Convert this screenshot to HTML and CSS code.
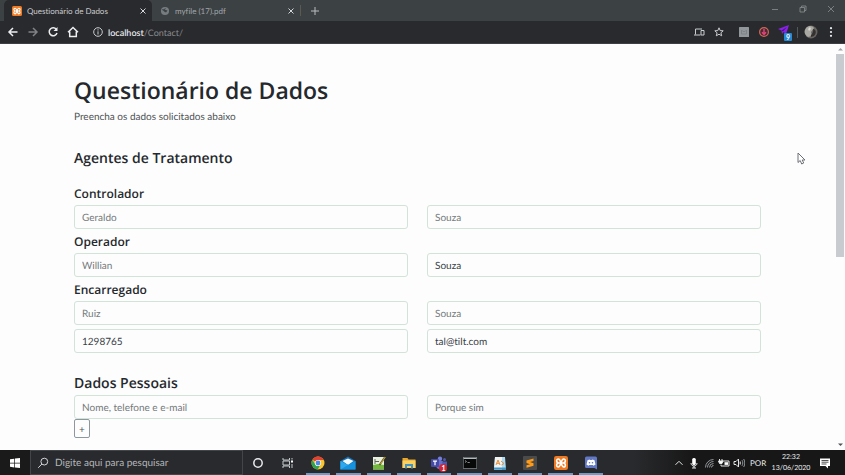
FILE: index.html
```html
<!DOCTYPE html>
<html lang="pt-BR">
<head>
<meta charset="utf-8">
<meta name="viewport" content="width=device-width, initial-scale=1">
<title>Questionário de Dados</title>
<link rel="stylesheet" href="styles.css">
</head>
<body>
<header class="browser">
  <div class="tabs">
    <div class="tab tab-active">
      <svg class="favicon" viewBox="0 0 16 16"><rect width="16" height="16" rx="2.500" fill="#ef7a24"/><path d="M5 3.500a2 2 0 0 0-2 2c0 1.500 1 2.500 2.500 2.500h5c1.500 0 2.500-1 2.500-2.500a2 2 0 0 0-2-2c-3 0-3 9-6 9a2 2 0 0 1-2-2C3 9 4 8 5.500 8M5 3.500c3 0 3 9 6 9a2 2 0 0 0 2-2C13 9 12 8 10.500 8" fill="none" stroke="#fff" stroke-width="1.800"/></svg>
      <span class="tab-title">Questionário de Dados</span>
      <button class="tab-close" aria-label="Fechar guia"><svg viewBox="0 0 8 8"><path d="M1.500 1.500l5 5M6.500 1.500l-5 5"/></svg></button>
    </div>
    <div class="tab">
      <svg class="favicon" viewBox="0 0 16 16"><circle cx="8" cy="8" r="6.500" fill="#777c80"/><path d="M3 6c2-2 3 0 4-1s0-2 2-2l-1 3 4 1-2 3H8L6 8z" fill="#3c4144"/></svg>
      <span class="tab-title">myfile (17).pdf</span>
      <button class="tab-close" aria-label="Fechar guia"><svg viewBox="0 0 8 8"><path d="M1.500 1.500l5 5M6.500 1.500l-5 5"/></svg></button>
    </div>
    <button class="new-tab" aria-label="Nova guia"><svg viewBox="0 0 10 10"><path d="M5 1v8M1 5h8"/></svg></button>
    <div class="window-controls">
      <button aria-label="Minimizar"><svg viewBox="0 0 8 8"><path d="M1 4.500h6"/></svg></button>
      <button aria-label="Restaurar"><svg viewBox="0 0 8 8"><path d="M1 2.500h4.500V7H1zM2.500 2.500V1H7v4.500H5.500"/></svg></button>
      <button aria-label="Fechar"><svg viewBox="0 0 8 8"><path d="M1 1l6 6M7 1L1 7"/></svg></button>
    </div>
  </div>
  <nav class="toolbar">
    <button class="tool" aria-label="Voltar"><svg viewBox="0 0 12 12"><path d="M10.500 6H2M6 2L2 6l4 4"/></svg></button>
    <button class="tool tool-off" aria-label="Avançar"><svg viewBox="0 0 12 12"><path d="M1.500 6H10M6 2l4 4-4 4"/></svg></button>
    <button class="tool" aria-label="Recarregar"><svg viewBox="0 0 12 12"><path d="M9.300 3.200A4 4 0 1 0 10 7"/><path d="M10.500 1v4h-4z" fill="#eceef0" stroke="none"/></svg></button>
    <button class="tool" aria-label="Início"><svg viewBox="0 0 12 12"><path d="M1 6.300L6 1.500l5 4.800M2.700 5.500v5h6.600v-5"/></svg></button>
    <button class="tool tool-thin site-info" aria-label="Informações do site"><svg viewBox="0 0 12 12"><circle cx="6" cy="6" r="4.300"/><path d="M6 5.300v3.200M6 3.300v1.200"/></svg></button>
    <span class="url"><b>localhost</b>/Contact/</span>
    <button class="tool tool-thin" aria-label="Enviar para dispositivos"><svg viewBox="0 0 12 12"><path d="M9 3H2.500v5.500M1 9h6.500M8 4.500h3V9H8z"/></svg></button>
    <button class="tool tool-thin" aria-label="Favoritar"><svg viewBox="0 0 12 12"><path d="M6 1.800l1.200 2.800 3 .2-2.300 2 .8 3L6 8.200 3.300 9.800l.8-3-2.300-2 3-.2z"/></svg></button>
    <button class="tool extensions" aria-label="Extensão"><svg viewBox="0 0 12 12"><rect x="1" y="1" width="10" height="10" rx=".5" fill="#92979c" stroke="none"/><path d="M3.500 4l1.500 1.500h2L8.500 4v4h-5z" fill="none" stroke="#7d8287" stroke-width="1"/></svg></button>
    <button class="tool" aria-label="Downloads"><svg viewBox="0 0 12 12"><circle cx="6" cy="6" r="4.400" fill="#4a2836" stroke="#d06a55" stroke-width="1.200"/><path d="M6 3v5M4 6.300L6 8.500l2-2.200" stroke="#e0447a" stroke-width="1.400"/></svg></button>
    <button class="tool" aria-label="Mensagens, 9"><svg class="icon-badged" viewBox="0 0 14 14"><path d="M1 4L12 0 9 9 6.500 7 5 9 4.500 5.500z" fill="#8a22e6"/><path d="M4.500 5.500L10 2 6 6.500z" fill="#44107e"/></svg><span class="badge">9</span></button>
    <span class="divider"></span>
    <button class="tool" aria-label="Perfil"><svg class="avatar" viewBox="0 0 14 14"><circle cx="7" cy="7" r="6.500" fill="#67635f"/><path d="M2 3c3-3 7-2 8 0L7 7l1 4-4 1C0 9 0 6 2 3z" fill="#aaa8a2"/><path d="M9 4c3 0 4 4 1 7l-3 1c-1-3 3-3 2-8z" fill="#33302f"/><path d="M4 4l2-2 1 2-2 2z" fill="#d8d8d2"/></svg></button>
    <button class="tool" aria-label="Menu"><svg viewBox="0 0 12 12"><g fill="#eceef0" stroke="none"><circle cx="6" cy="2.200" r="1.100"/><circle cx="6" cy="6" r="1.100"/><circle cx="6" cy="9.800" r="1.100"/></g></svg></button>
  </nav>
</header>

<div class="viewport">
  <main class="page">
    <h1>Questionário de Dados</h1>
    <p>Preencha os dados solicitados abaixo</p>
    <form>
      <h2>Agentes de Tratamento</h2>
      <div class="group">
        <h3><label for="controlador">Controlador</label></h3>
        <div class="fields">
          <input id="controlador" type="text" placeholder="Geraldo">
          <input type="text" placeholder="Souza" aria-label="Sobrenome do controlador">
        </div>
      </div>
      <div class="group">
        <h3><label for="operador">Operador</label></h3>
        <div class="fields">
          <input id="operador" type="text" placeholder="Willian">
          <input type="text" value="Souza" aria-label="Sobrenome do operador">
        </div>
      </div>
      <div class="group">
        <h3><label for="encarregado">Encarregado</label></h3>
        <div class="fields">
          <input id="encarregado" type="text" placeholder="Ruiz">
          <input type="text" placeholder="Souza" aria-label="Sobrenome do encarregado">
          <input type="text" value="1298765" aria-label="Telefone do encarregado">
          <input type="text" value="tal@tilt.com" aria-label="E-mail do encarregado">
        </div>
      </div>
      <h2 class="personal"><label for="dados">Dados Pessoais</label></h2>
      <div class="fields">
        <input id="dados" type="text" placeholder="Nome, telefone e e-mail">
        <input type="text" placeholder="Porque sim" aria-label="Motivo">
      </div>
      <button class="add" type="button" aria-label="Adicionar">+</button>
    </form>
  </main>
  <div class="scrollbar" aria-hidden="true">
    <svg viewBox="0 0 9 10"><path d="M2 6.500L4.500 4 7 6.500z" fill="#a0a3a7"/></svg>
    <div class="thumb"></div>
    <svg class="scroll-down" viewBox="0 0 9 10"><path d="M2 3.500L4.500 6 7 3.500z" fill="#505357"/></svg>
  </div>
  <svg class="pointer" viewBox="0 0 9 13"><path d="M1 1v9.500l2.200-2 1.500 3.500 2-1-1.500-3H8z" fill="#fff" stroke="#6c7075"/></svg>
</div>

<footer class="taskbar">
  <button class="start" aria-label="Iniciar"><svg viewBox="0 0 12 12"><path d="M1 2.300l4.300-.6v4H1zM6 1.600L11 1v4.700H6zM1 6.400h4.300v4L1 9.800zM6 6.400h5V11l-5-.6z" fill="#fff"/></svg></button>
  <label class="search">
    <svg viewBox="0 0 12 12"><circle cx="7.300" cy="4.600" r="3.400"/><path d="M4.900 7L1.200 10.800"/></svg>
    <input type="text" placeholder="Digite aqui para pesquisar">
  </label>
  <button class="shell" aria-label="Cortana"><svg viewBox="0 0 14 14"><circle cx="7" cy="7" r="4.200" fill="none" stroke="#e8eaec" stroke-width="1.500"/></svg></button>
  <button class="shell" aria-label="Visão de tarefas"><svg viewBox="0 0 14 14"><path d="M2 2v2h6.500V2M2 12v-2h6.500v2M2 5v4h6.500V5zM11 2v1.500M11 8v4" fill="none" stroke="#c5c9cc"/><path d="M10 4.500h2v2h-2z" fill="#fff"/></svg></button>
  <div class="apps">
    <button aria-label="Chrome"><svg viewBox="0 0 14 14"><circle cx="7" cy="7" r="6.500" fill="#fbc52d"/><path d="M7 7L1.400 3.700A6.500 6.500 0 0 1 12.700 4H7z" fill="#e34133"/><path d="M1.400 3.700A6.500 6.500 0 0 0 6.700 13.500L9.600 8.500 7 7 4.200 8.500z" fill="#30a251"/><circle cx="7" cy="7" r="3.100" fill="#fff"/><circle cx="7" cy="7" r="2.400" fill="#4a88ea"/></svg></button>
    <button aria-label="Email"><svg class="wide" viewBox="0 0 16 14"><path d="M.5 5L8 .5 15.500 5v8.500H.5z" fill="#1572b8"/><path d="M2.500 5L8 2.500 13.500 5 8 9z" fill="#f3f8fb"/><path d="M.5 5L8 9l7.500-4v8.500H.5z" fill="#1693df"/><path d="M.5 5L8 9 .5 13.500z" fill="#2fa8ee"/></svg></button>
    <button aria-label="Notepad++"><svg viewBox="0 0 14 14"><path d="M1 1h11v12.500H1z" fill="#e9f0de"/><path d="M1 9l5-1 6 1v4.500H1z" fill="#72b83c"/><path d="M3 3v5M3 5.500h4" stroke="#5b6659"/><path d="M13 1L7.500 9" stroke="#655d29" stroke-width="1.800"/><path d="M13.300 1L8.500 8" stroke="#dcb836" stroke-width=".8"/></svg></button>
    <button aria-label="Explorador de Arquivos"><svg viewBox="0 0 14 14"><path d="M.5 2h5l1 1.500h7V12H.5z" fill="#e9a72d"/><path d="M.5 4.500h13V12H.5z" fill="#fad160"/><path d="M3 12.500V8h8v4.500H9V10H5v2.500z" fill="#3d94cb"/></svg></button>
    <button aria-label="Teams, 1"><svg class="wide" viewBox="0 0 16 14"><circle cx="9" cy="2.700" r="2.200" fill="#777edb"/><circle cx="13.500" cy="3.500" r="1.500" fill="#5158ae"/><path d="M5 5h7v7c-2 2-6 2-7-2z" fill="#6870ce"/><path d="M11 5.500h5v4c-1 3-4 2-4 1z" fill="#5057ac"/><rect y="3" width="8" height="8" rx="1" fill="#464ba8"/><path d="M2 5.200h4M4 5.200v4" stroke="#fff" stroke-width="1.200"/></svg><span class="badge alert">1</span></button>
    <button aria-label="Prompt de Comando"><svg viewBox="0 0 14 14"><rect x=".2" y="1.500" width="13.600" height="11" fill="#070808" stroke="#8a9297" stroke-width=".7"/><path d="M.5 2.500h13" stroke="#b4babe"/><path d="M2 4.500l1.500 1L2 6.500M4.500 6.500h2.300" fill="none" stroke="#a5aaae" stroke-width=".8"/></svg></button>
    <button aria-label="Editor"><svg viewBox="0 0 14 14"><path d="M2 1h10l1 12.500H1z" fill="#afdbf1"/><path d="M4 1h5v12.500H1L2 1z" fill="#f0f4f3"/><path d="M3 9l2-5 2 5M3.700 7.300h2.800M8 5l3 2.500L8.500 9" fill="none" stroke="#e98c38"/><path d="M1 11.500h12v2H1z" fill="#3c99ce"/></svg></button>
    <button aria-label="Sublime Text"><svg viewBox="0 0 14 14"><rect width="14" height="14" rx="1" fill="#4b4b4b"/><path d="M3.500 4.500l7-2v2.500L7 6l3.500 1.200v2.600l-7 2V9.300L7 8.200 3.500 7z" fill="#ff9b18"/></svg></button>
    <button aria-label="XAMPP"><svg viewBox="0 0 16 16"><rect width="16" height="16" rx="2.500" fill="#ef7a24"/><path d="M5 3.500a2 2 0 0 0-2 2c0 1.500 1 2.500 2.500 2.500h5c1.500 0 2.500-1 2.500-2.500a2 2 0 0 0-2-2c-3 0-3 9-6 9a2 2 0 0 1-2-2C3 9 4 8 5.500 8M5 3.500c3 0 3 9 6 9a2 2 0 0 0 2-2C13 9 12 8 10.500 8" fill="none" stroke="#fff" stroke-width="1.800"/></svg></button>
    <button aria-label="Discord"><svg viewBox="0 0 14 14"><path d="M2.500.5h9a1.500 1.500 0 0 1 1.500 1.500v11.500L10.500 12h-8A1.500 1.500 0 0 1 1 10.500V2A1.500 1.500 0 0 1 2.500.5z" fill="#6378c5"/><path d="M3.500 4.200L5.500 3.400l.5.600h2l.5-.6 2 .8 1 4.300-2 1.200-.8-.8H5.300l-.8.800-2-1.200z" fill="#fff"/><circle cx="5.500" cy="6.700" r=".8" fill="#6378c5"/><circle cx="8.500" cy="6.700" r=".8" fill="#6378c5"/></svg></button>
  </div>
  <div class="tray">
    <button aria-label="Ícones ocultos"><svg viewBox="0 0 12 12"><path d="M2.500 7.800L6 4.300l3.500 3.500"/></svg></button>
    <button aria-label="Microfone"><svg viewBox="0 0 12 12"><rect x="4.200" y="1" width="3.600" height="7" rx="1.500" fill="#fff" stroke="none"/><path d="M3 6c0 4 6 4 6 0M6 9v2M4 11h4"/></svg></button>
    <button aria-label="Rede"><svg viewBox="0 0 12 12"><path d="M2.500 10.500A8 8 0 0 1 10.500 2.500M4.500 10.500a6 6 0 0 1 6-6M6.500 10.500a4 4 0 0 1 4-4M8.500 10.500a2 2 0 0 1 2-2" stroke="#92989d"/></svg></button>
    <button aria-label="Bateria"><svg viewBox="0 0 12 12"><path d="M4 4h7v5H3V7.500"/><path d="M6.500 5.200H10v2.700H6.500z" fill="#fff" stroke="none"/><path d="M1.500 2v2M4 2v2M.5 4h4.500L4 6.500H1.500z" fill="#fff"/></svg></button>
    <button aria-label="Volume"><svg viewBox="0 0 12 12"><path d="M1 4.500h2L5.500 2v8L3 7.500H1zM7.200 4.500v3"/><path d="M9 3.200c1 1.500 1 4 0 5.600M10.700 2c1.500 2.500 1.500 5.500 0 8" stroke="#92989d"/></svg></button>
    <span class="lang">POR</span>
    <time class="clock" datetime="2020-06-13T22:32"><span>22:32</span><span>13/06/2020</span></time>
    <button class="notices" aria-label="Notificações"><svg viewBox="0 0 12 12"><path d="M1 1.500h10V9H9v2.500L6.500 9H1z" fill="#fff" stroke="none"/><path d="M2.500 3.500h7M2.500 5.200h7M2.500 7h5" stroke="#222" stroke-width=".8"/></svg></button>
  </div>
</footer>
</body>
</html>
```
FILE: styles.css
```css
* {
  box-sizing: border-box;
}

body {
  margin: 0;
  height: 100vh;
  display: flex;
  flex-direction: column;
  overflow: hidden;
  background: #fdfdfd;
  color: #25292d;
  font-family: Lato, "Open Sans", sans-serif;
  font-size: 10px;
  font-variant-ligatures: none;
  text-rendering: geometricPrecision;
}

button {
  display: flex;
  align-items: center;
  justify-content: center;
  margin: 0;
  padding: 0;
  border: 0;
  background: none;
  color: inherit;
  font: inherit;
}

input {
  text-rendering: inherit;
}

svg {
  display: block;
  flex: none;
}

/* Browser chrome */
.browser {
  flex: none;
  color: #e4e6e8;
}

.tabs {
  display: flex;
  align-items: stretch;
  height: 21px;
  background: #3c4144;
}

.tab {
  display: flex;
  align-items: center;
  width: 148px;
  padding: 0 5px 0 8px;
  color: #a3a7aa;
  font-size: 8px;
}

.tab-active {
  margin-left: 4px;
  border-radius: 5px 5px 0 0;
  background: #292a2d;
  color: #c9cbce;
}

.favicon {
  width: 10px;
  height: 10px;
  margin-right: 5px;
}

.tab-title {
  flex: 1;
  white-space: nowrap;
}

.tab-close svg {
  width: 8px;
  height: 8px;
  stroke: #d5d8db;
}

.new-tab {
  width: 28px;
  height: 11px;
  margin-top: 5px;
  border-left: 1px solid #5c5852;
}

.new-tab svg {
  width: 10px;
  height: 10px;
  stroke: #b9bcbf;
}

.window-controls {
  display: flex;
  margin-left: auto;
  padding-bottom: 3px;
}

.window-controls button {
  width: 28px;
}

.window-controls svg {
  width: 8px;
  height: 8px;
  fill: none;
  stroke: #8b8f91;
  stroke-width: 0.8;
}

.toolbar {
  display: flex;
  align-items: center;
  height: 23px;
  padding: 0 4px 0 3px;
  border-bottom: 1px solid #3e3f42;
  background: #292a2d;
}

.tool {
  position: relative;
  width: 20px;
  height: 20px;
}

.tool svg {
  width: 12px;
  height: 12px;
  fill: none;
  stroke: #eceef0;
  stroke-width: 1.5;
}

.tool-off svg {
  stroke: #808386;
}

.tool-thin svg {
  stroke: #c9ccd0;
  stroke-width: 1;
}

.tool svg.icon-badged,
.tool svg.avatar {
  width: 14px;
  height: 14px;
  stroke: none;
}

.site-info {
  margin-left: 5px;
}

.url {
  flex: 1;
  color: #898c8f;
  font-size: 9px;
}

.url b {
  color: #e6e8ea;
  font-weight: 600;
}

.extensions {
  margin-left: 5px;
}

.divider {
  width: 1px;
  height: 11px;
  margin: 0 3px;
  background: #54575a;
}

.badge {
  position: absolute;
  right: 2px;
  bottom: 1px;
  width: 8px;
  height: 8px;
  border-radius: 1px;
  background: #258bd6;
  color: #fff;
  font-size: 7px;
  font-weight: 700;
  line-height: 8px;
  text-align: center;
}

/* Form page */
.viewport {
  position: relative;
  display: flex;
  flex: 1;
  min-height: 0;
}

.page {
  flex: 1;
  padding: 31px 75px 0 74px;
  overflow: hidden;
}

h1,
h2,
h3,
p {
  margin: 0;
}

h1,
h2,
h3 {
  font-family: "Open Sans", sans-serif;
  font-weight: 600;
}

h1 {
  font-size: 23px;
  line-height: 30px;
}

h2 {
  margin-top: 24px;
  margin-bottom: 17px;
  font-size: 14px;
  line-height: 20px;
}

h2.personal {
  margin-top: 21px;
  margin-bottom: 1px;
}

h3 {
  margin-bottom: 3px;
  font-size: 12px;
  line-height: 16px;
}

p {
  margin-top: 4px;
  color: #4d5154;
  line-height: 16px;
}

.group + .group {
  margin-top: 5px;
}

.fields {
  display: grid;
  grid-template-columns: 1fr 1fr;
  gap: 4px 19px;
}

.fields input {
  min-width: 0;
  height: 24px;
  padding: 2px 7px 0;
  border: 1px solid #d2e3d8;
  border-radius: 3px;
  background: #fdfdfd;
  color: #3a3f48;
  font: inherit;
}

.fields input::placeholder {
  color: #747a7c;
  opacity: 1;
}

.add {
  width: 16px;
  height: 19px;
  border: 1px solid #8f979e;
  border-radius: 2px;
  color: #4f575e;
}

.scrollbar {
  display: flex;
  flex-direction: column;
  width: 9px;
}

.scrollbar svg {
  width: 9px;
  height: 10px;
}

.thumb {
  width: 8px;
  height: 50%;
  background: #c8cbd0;
}

.scrollbar .scroll-down {
  margin-top: auto;
}

.pointer {
  position: absolute;
  top: 108px;
  right: 39px;
  width: 9px;
  height: 13px;
}

/* Taskbar */
.taskbar {
  display: flex;
  flex: none;
  height: 25px;
  background: linear-gradient(90deg, #292a2d 75%, #171717 82%);
  color: #e9ebed;
}

.start {
  width: 30px;
  background: #1a1a1b;
}

.start svg {
  width: 12px;
  height: 12px;
}

.search {
  display: flex;
  align-items: center;
  width: 213px;
  padding: 0 6px;
  gap: 6px;
  border: 1px solid #434648;
}

.search svg {
  width: 12px;
  height: 12px;
  fill: none;
  stroke: #d5d8da;
}

.search input {
  flex: 1;
  min-width: 0;
  padding: 0;
  border: 0;
  background: none;
  color: #d0d2d4;
  font: inherit;
}

.search input::placeholder {
  color: #b4b7ba;
  opacity: 1;
}

.shell {
  width: 30px;
}

.shell svg {
  width: 14px;
  height: 14px;
}

.apps {
  display: flex;
  width: 303px;
}

.apps button {
  position: relative;
  flex: 1;
}

.apps button::after {
  content: "";
  position: absolute;
  right: 3px;
  bottom: 0;
  left: 3px;
  height: 2px;
  background: #6f9cc4;
}

.apps svg {
  width: 14px;
  height: 14px;
}

.apps svg.wide {
  width: 16px;
}

.badge.alert {
  right: 7px;
  bottom: 3px;
  border-radius: 50%;
  background: #cf2637;
}

.tray {
  display: flex;
  align-items: center;
  margin-left: auto;
  padding-right: 13px;
}

.tray button {
  width: 15px;
}

.tray svg {
  width: 12px;
  height: 12px;
  fill: none;
  stroke: #e4e6e8;
}

.lang {
  width: 15px;
  margin: 0 7px 0 4px;
  font-size: 8px;
}

.clock {
  display: flex;
  flex-direction: column;
  align-items: center;
  width: 38px;
  font-size: 7px;
  line-height: 11px;
}

.tray .notices {
  margin-left: 7px;
}
```
